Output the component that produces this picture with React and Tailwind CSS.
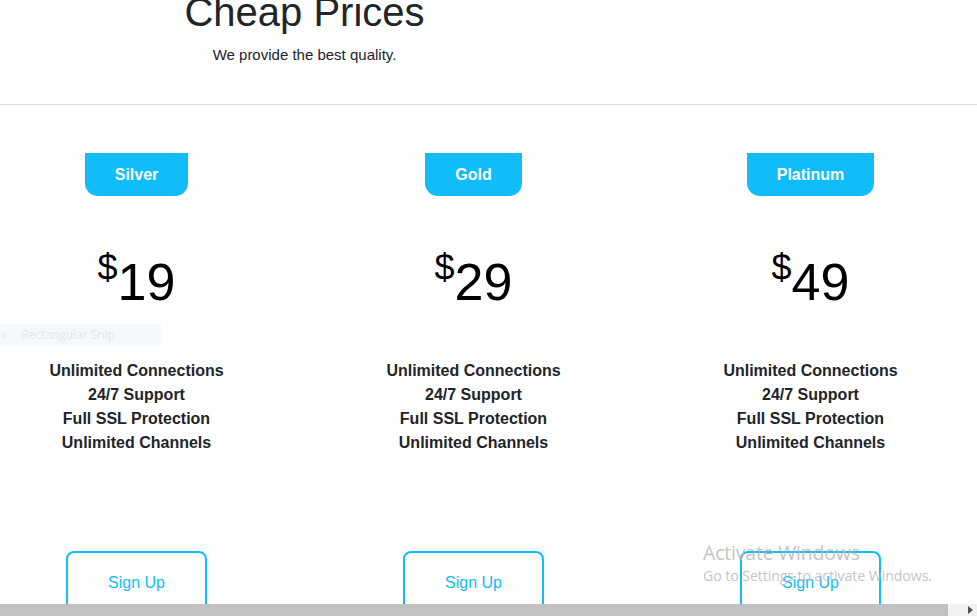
import React from 'react';

const plans = [
    { name: 'Silver', price: '19' },
    { name: 'Gold', price: '29' },
    { name: 'Platinum', price: '49' },
];

const features = ['Unlimited Connections', '24/7 Support', 'Full SSL Protection', 'Unlimited Channels'];

function PlanCard({ plan }) {
    return (
        <div className="w-[337px] shrink-0 flex flex-col items-center">
            <div className="h-[43px] px-[30px] flex items-center bg-[#10bdf9] text-white font-bold text-[16px] rounded-b-[13px]">
                {plan.name}
            </div>
            <div className="mt-[60px] text-[52px] leading-none text-black">
                <sup className="text-[36px] top-[-0.55em]">$</sup>{plan.price}
            </div>
            <ul className="mt-[51px] text-center font-bold text-[16px] leading-[24px] text-[#212529]">
                {features.map(f => (
                    <li key={f}>{f}</li>
                ))}
            </ul>
            <button className="mt-[96px] px-10 pt-[18px] pb-[18px] border-2 border-[#10bdf9] rounded-[8px] text-[#10bdf9] text-[16px] leading-[24px]">
                Sign Up
            </button>
        </div>
    );
}

export default function App() {
    return (
        <div className="relative h-[616px] w-[977px] overflow-hidden flex flex-col bg-white font-['Liberation_Sans',Arial,sans-serif]">
            <div className="flex-1 overflow-hidden">
                <div className="-mt-[12px] w-[609px] text-center text-[#212529]">
                    <h1 className="text-[40px] leading-[48px]">Cheap Prices</h1>
                    <p className="mt-[9px] text-[15px] leading-[20px]">We provide the best quality.</p>
                </div>
                <hr className="mt-[39px] border-t border-[#dddddd]" />
                <div className="mt-[48px] -ml-[32px] flex">
                    {plans.map(p => (
                        <PlanCard key={p.name} plan={p} />
                    ))}
                </div>
            </div>

            {/* fake horizontal scrollbar */}
            <div className="h-[12px] shrink-0 flex items-center bg-[#f1f1f1]">
                <div className="h-full w-[948px] bg-[#c1c1c1]" />
                <div className="flex-1 flex justify-end pr-[4px]">
                    <svg width="5" height="8" viewBox="0 0 5 8"><path d="M0 0 L5 4 L0 8 Z" fill="#505050" /></svg>
                </div>
            </div>

            {/* snipping tool leftover */}
            <div className="absolute left-0 top-[324px] w-[161px] h-[21px] bg-[#f4f9fe] flex items-center font-['Open_Sans',sans-serif] text-[12px] text-[#e3e8ec]">
                <span className="w-[6px] h-[6px] ml-[1px] rounded-full bg-[#edf1f5]" />
                <span className="ml-[14px]">Rectangular Snip</span>
            </div>

            {/* windows watermark */}
            <div className="absolute left-[703px] top-[540px] font-['Open_Sans',sans-serif] text-[#b4b4b4]/80 pointer-events-none">
                <div className="text-[19.5px] leading-[26px] tracking-[-0.2px]">Activate Windows</div>
                <div className="text-[14.2px] leading-[18px] mt-[1px] tracking-[-0.1px]">Go to Settings to activate Windows.</div>
            </div>
        </div>
    );
}
